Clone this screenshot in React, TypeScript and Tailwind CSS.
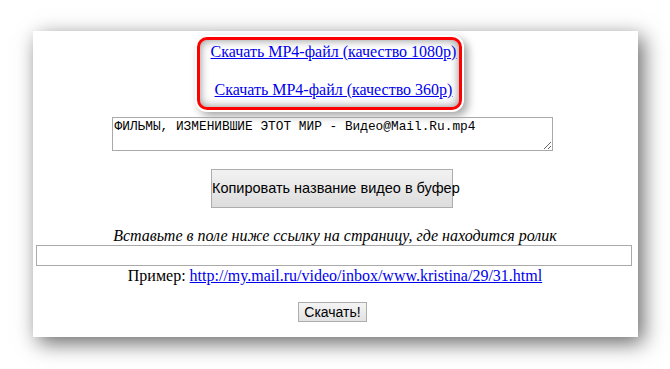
import React from "react";

export default function App() {
  return (
    <div className="w-[670px] h-[369px] bg-white overflow-hidden pt-[31px] font-['Liberation_Serif','Times_New_Roman',serif]">
      <div className="mx-auto w-[605px] h-[306px] bg-white shadow-[5px_6px_20px_rgba(0,0,0,0.6)] flex flex-col items-center">
        <div className="mt-[6px] ml-[-11px] w-[265px] h-[73px] border-[3px] border-[#ff0000] rounded-[10px] bg-white shadow-[inset_0_0_10px_#8a8a8a,0_0_0_2px_#ffffff,4px_4px_9px_2px_rgba(0,0,0,0.35)] flex flex-col items-center pl-[8px] pt-[3px]">
          <a href="#" className="text-[16px] leading-[18px] text-[#0000ee] underline whitespace-nowrap font-['Liberation_Serif',serif]">
            Скачать MP4-файл (качество 1080p)
          </a>
          <a href="#" className="mt-[20px] text-[16px] leading-[18px] text-[#0000ee] underline whitespace-nowrap font-['Liberation_Serif',serif]">
            Скачать MP4-файл (качество 360p)
          </a>
        </div>
        <textarea
          className="mt-[7px] ml-[-6px] w-[441px] h-[34px] border border-[#a9a9a9] px-[2px] py-[1px] text-[12.8px] leading-[16px] text-black outline-none resize font-['Liberation_Mono','DejaVu_Sans_Mono',monospace]"
          defaultValue="ФИЛЬМЫ, ИЗМЕНИВШИЕ ЭТОТ МИР - Видео@Mail.Ru.mp4"
        />
        <button className="mt-[18px] ml-[-6px] w-[242px] h-[39px] border border-[#adadad] bg-gradient-to-b from-[#f2f2f2] to-[#dddddd] text-[14.5px] text-black whitespace-nowrap font-['Liberation_Sans',Arial,sans-serif]">
          Копировать название видео в буфер
        </button>
        <div className="mt-[18px] text-[16px] leading-[19px] italic text-black whitespace-nowrap">
          Вставьте в поле ниже ссылку на страницу, где находится ролик
        </div>
        <input
          className="w-[596px] h-[21px] border border-[#a9a9a9] outline-none ml-[-2px]"
          type="text"
        />
        <div className="text-[16px] leading-[19px] text-black whitespace-nowrap">
          Пример:{" "}
          <a href="#" className="text-[#0000ee] underline font-['Liberation_Serif',serif]">
            http://my.mail.ru/video/inbox/www.kristina/29/31.html
          </a>
        </div>
        <button className="mt-[17px] ml-[-5px] w-[69px] h-[20px] border border-[#adadad] bg-gradient-to-b from-[#f4f4f4] to-[#e2e2e2] text-[14px] leading-[16px] text-black whitespace-nowrap font-['Liberation_Sans',Arial,sans-serif]">
          Скачать!
        </button>
      </div>
    </div>
  );
}
